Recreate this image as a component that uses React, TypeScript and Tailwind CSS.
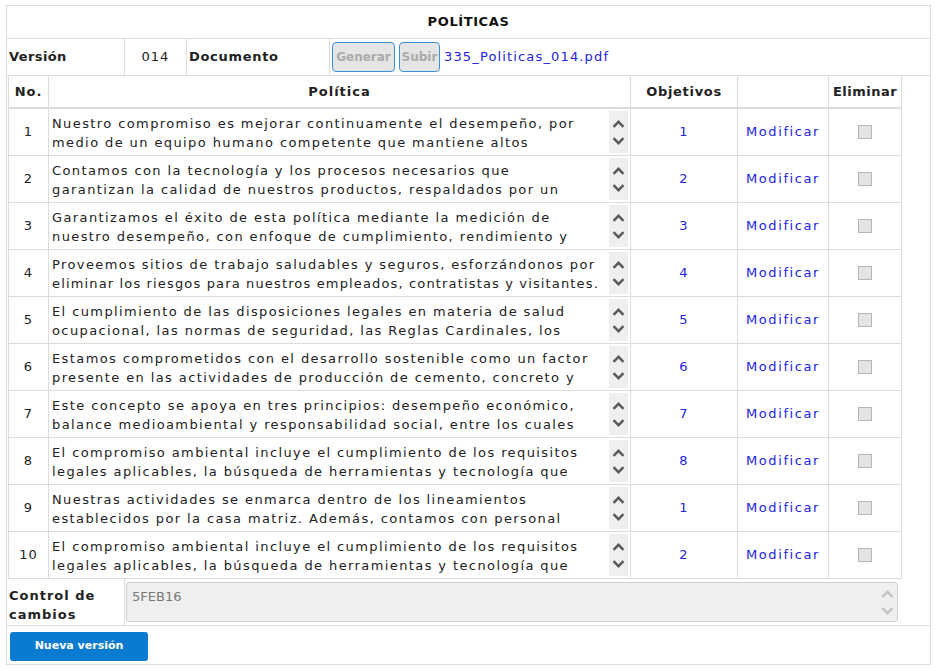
import React from 'react';

type Row = { no: number; obj: number; a: string; b: string; bt?: string };

const rows: Row[] = [
  { no: 1, obj: 1, a: 'Nuestro compromiso es mejorar continuamente el desempeño, por', b: 'medio de un equipo humano competente que mantiene altos' },
  { no: 2, obj: 2, a: 'Contamos con la tecnología y los procesos necesarios que', b: 'garantizan la calidad de nuestros productos, respaldados por un' },
  { no: 3, obj: 3, a: 'Garantizamos el éxito de esta política mediante la medición de', b: 'nuestro desempeño, con enfoque de cumplimiento, rendimiento y' },
  {
    no: 4,
    obj: 4,
    a: 'Proveemos sitios de trabajo saludables y seguros, esforzándonos por',
    b: 'eliminar los riesgos para nuestros empleados, contratistas y visitantes.',
    bt: 'tracking-[1.15px]',
  },
  { no: 5, obj: 5, a: 'El cumplimiento de las disposiciones legales en materia de salud', b: 'ocupacional, las normas de seguridad, las Reglas Cardinales, los' },
  { no: 6, obj: 6, a: 'Estamos comprometidos con el desarrollo sostenible como un factor', b: 'presente en las actividades de producción de cemento, concreto y' },
  { no: 7, obj: 7, a: 'Este concepto se apoya en tres principios: desempeño económico,', b: 'balance medioambiental y responsabilidad social, entre los cuales' },
  { no: 8, obj: 8, a: 'El compromiso ambiental incluye el cumplimiento de los requisitos', b: 'legales aplicables, la búsqueda de herramientas y tecnología que' },
  { no: 9, obj: 1, a: 'Nuestras actividades se enmarca dentro de los lineamientos', b: 'establecidos por la casa matriz. Además, contamos con personal' },
  { no: 10, obj: 2, a: 'El compromiso ambiental incluye el cumplimiento de los requisitos', b: 'legales aplicables, la búsqueda de herramientas y tecnología que' },
];

const Chevron = ({ up, light }: { up?: boolean; light?: boolean }) => (
  <svg width="13" height="8" viewBox="0 0 13 8">
    <polyline
      points={up ? '1.5,6.8 6.5,1.8 11.5,6.8' : '1.5,1.2 6.5,6.2 11.5,1.2'}
      fill="none"
      stroke={light ? '#c4c4c4' : '#5a5a5a'}
      strokeWidth="2.4"
    />
  </svg>
);

const ScrollArrows = ({ light }: { light?: boolean }) => (
  <div className="flex h-full w-[19px] flex-col items-center justify-center gap-[9px] bg-[#efefef]">
    <Chevron up light={light} />
    <Chevron light={light} />
  </div>
);

const Checkbox = () => <div className="h-[14px] w-[14px] border border-[#b5b5b5] bg-[#e4e4e4]" />;

export default function App() {
  return (
    <div className="min-h-[671px] bg-white pt-[5px] font-['DejaVu_Sans',sans-serif] text-[13px] text-[#222]">
      <div className="ml-[6px] w-[925px] border border-[#dcdcdc]">
        {/* titulo */}
        <div className="flex h-[33px] items-center justify-center border-b border-[#dcdcdc] text-[13px] font-bold tracking-[0.6px] text-[#111]">
          POLÍTICAS
        </div>

        {/* version / documento */}
        <div className="flex h-[37px] border-b border-[#dcdcdc]">
          <div className="flex w-[118px] items-center border-r border-[#dcdcdc] pl-[2px] font-bold tracking-[0.4px]">
            Versión
          </div>
          <div className="flex w-[62px] items-center justify-center border-r border-[#dcdcdc] tracking-[1px]">
            014
          </div>
          <div className="flex w-[143px] items-center border-r border-[#dcdcdc] pl-[2px] font-bold tracking-[0.7px]">
            Documento
          </div>
          <div className="flex items-center gap-[4px] pl-[2px]">
            <button className="h-[30px] w-[63px] rounded-[4px] border border-[#3d8fd8] bg-[#e5e5e5] text-[12px] font-bold text-[#aaa]">
              Generar
            </button>
            <button className="h-[30px] w-[41px] rounded-[4px] border border-[#3d8fd8] bg-[#e5e5e5] text-[12px] font-bold text-[#aaa]">
              Subir
            </button>
            <span className="tracking-[1.15px] text-[#2323e6]">335_Politicas_014.pdf</span>
          </div>
        </div>

        {/* tabla */}
        <div className="ml-px w-[894px] border-x border-[#dcdcdc]">
          <div className="grid h-[33px] grid-cols-[40px_582px_107px_91px_72px] border-b-2 border-[#dcdcdc] font-bold">
            <div className="flex items-center justify-center border-r border-[#dcdcdc] tracking-[1px]">No.</div>
            <div className="flex items-center justify-center border-r border-[#dcdcdc] tracking-[1px]">Política</div>
            <div className="flex items-center justify-center border-r border-[#dcdcdc] tracking-[0.7px]">Objetivos</div>
            <div className="border-r border-[#dcdcdc]" />
            <div className="flex items-center justify-center tracking-[0.5px]">Eliminar</div>
          </div>
          {rows.map((r) => (
            <div
              key={r.no}
              className="grid h-[47px] grid-cols-[40px_582px_107px_91px_72px] border-b border-[#dcdcdc]"
            >
              <div className="flex items-center justify-center border-r border-[#dcdcdc] tracking-[1px]">{r.no}</div>
              <div className="flex items-center border-r border-[#dcdcdc] py-[2px] pr-[2px]">
                <div className="flex-1 overflow-hidden whitespace-nowrap pl-[3px] pt-px leading-[19px] tracking-[1.4px]">
                  <div>{r.a}</div>
                  <div className={r.bt}>{r.b}</div>
                </div>
                <ScrollArrows />
              </div>
              <div className="flex items-center justify-center border-r border-[#dcdcdc] tracking-[1px] text-[#2323e6]">
                {r.obj}
              </div>
              <div className="flex items-center justify-center border-r border-[#dcdcdc] tracking-[1.6px] text-[#2323e6]">
                Modificar
              </div>
              <div className="flex items-center justify-center">
                <Checkbox />
              </div>
            </div>
          ))}
        </div>

        {/* control de cambios */}
        <div className="flex h-[47px] border-b border-[#dcdcdc]">
          <div className="flex w-[118px] flex-col justify-center border-r border-[#dcdcdc] pl-[2px] pt-[5px] font-bold leading-[19px] tracking-[1px]">
            <span>Control de</span>
            <span>cambios</span>
          </div>
          <div className="flex flex-1 items-stretch py-[3px] pl-[1px] pr-[32px]">
            <div className="flex flex-1 overflow-hidden rounded-[3px] border border-[#cfcfcf] bg-[#efefef]">
              <div className="flex-1 pl-[5px] pt-[4px] text-[13px] text-[#777]">5FEB16</div>
              <ScrollArrows light />
            </div>
          </div>
        </div>

        {/* boton */}
        <div className="flex h-[38px] items-center pl-[3px] pt-[2px]">
          <button className="h-[29px] w-[138px] rounded-[3px] bg-[#0a7bd0] text-[11px] font-bold text-white">
            Nueva versión
          </button>
        </div>
      </div>
    </div>
  );
}
